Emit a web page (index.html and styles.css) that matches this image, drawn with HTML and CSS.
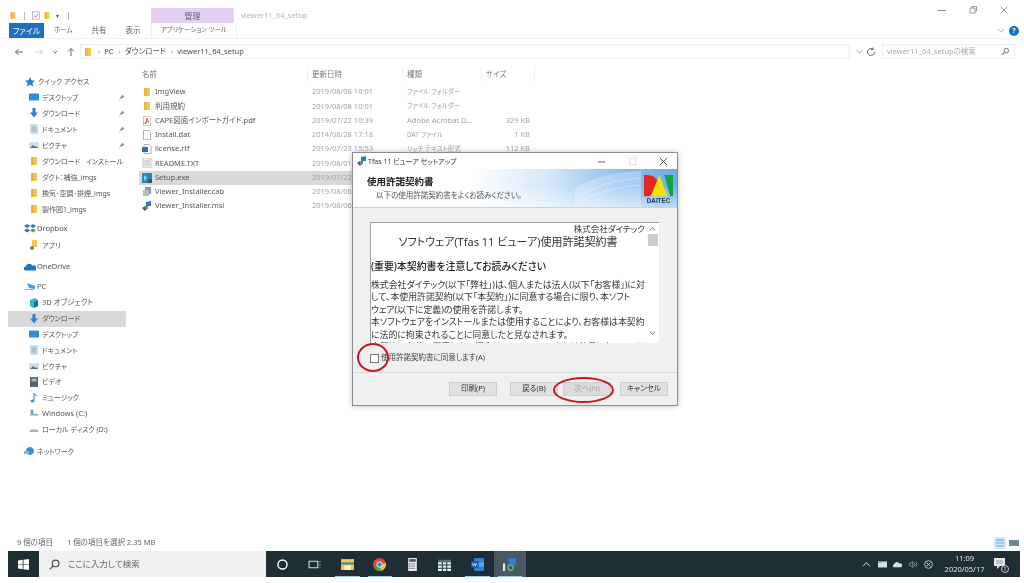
FILE: index.html
```html
<!DOCTYPE html>
<html lang="ja">
<head>
<meta charset="utf-8">
<title>viewer11_64_setup</title>
<link rel="stylesheet" href="styles.css">
</head>
<body>
<svg class="defs" aria-hidden="true">
  <symbol id="folder" viewBox="0 0 10 10"><path d="M2 1h6v8H2z" fill="#f2c94c"/><path d="M2 1h3v8H2z" fill="#e8b93a"/></symbol>
  <symbol id="pin" viewBox="0 0 8 8"><path d="M5 1l2 2-1.500.6L4 5.500 2.500 4 4.400 2.500zM3 5L1 7" fill="#888" stroke="#888" stroke-width=".6"/></symbol>
  <symbol id="desk" viewBox="0 0 10 10"><rect x="0" y="1.500" width="10" height="7" rx=".6" fill="#2f8fdc"/></symbol>
  <symbol id="down" viewBox="0 0 10 10"><path d="M3.500 0h3v4.500H9L5 9.500 1 4.500h2.500z" fill="#2f7fd0"/></symbol>
  <symbol id="doc" viewBox="0 0 10 10"><rect x="1" y="0" width="8" height="10" fill="#cfdbe3"/><path d="M2.500 3h5M2.500 5h5M2.500 7h5" stroke="#7f97a8" stroke-width=".7"/></symbol>
  <symbol id="pic" viewBox="0 0 10 10"><rect x="0" y="2" width="10" height="6.500" fill="#d5dee5"/><path d="M1 8l3-3 2 2 1-1 2 2z" fill="#55707f"/></symbol>
  <symbol id="video" viewBox="0 0 10 10"><rect x="1" y="0" width="8" height="10" fill="#56646e"/><rect x="2.500" y="1.500" width="5" height="3" fill="#a9b5bd"/></symbol>
  <symbol id="music" viewBox="0 0 10 10"><path d="M5 0v7.500" stroke="#2f9fd8" stroke-width="1.200"/><path d="M5 .5l3 2.500" stroke="#2f9fd8" stroke-width="1"/><ellipse cx="3.500" cy="8" rx="2" ry="1.600" fill="#2f9fd8"/></symbol>
  <symbol id="drive" viewBox="0 0 12 10"><path d="M1 7l2-1h7l1 1v1H1z" fill="#9aa5ab"/><rect x="2" y="1" width="3" height="5" fill="#4aa0d8"/></symbol>
  <symbol id="drive2" viewBox="0 0 12 10"><path d="M1 7l2-1.500h6L11 7v1.500H1z" fill="#a8b0b5"/></symbol>
  <symbol id="net" viewBox="0 0 12 10"><path d="M6 1a4 4 0 1 1-.1 0z" fill="#3b8fcf"/><rect x="0" y="5" width="5" height="3" fill="#7fb6dc"/></symbol>
  <symbol id="cloud" viewBox="0 0 12 8"><path d="M1 7.500a2 2 0 0 1 .6-3.800A3.600 3.600 0 0 1 8.400 2.700 2.600 2.600 0 0 1 11 7.500z" fill="#1677c0"/></symbol>
  <symbol id="box" viewBox="0 0 12 10"><path d="M3 0l3 2-3 2-3-2zM9 0l3 2-3 2-3-2zM3 4.500l3 2-3 2-3-2z" fill="#3a6fc4"/><path d="M9 4.500l3 2-3 2-3-2z" fill="#4caf50"/></symbol>
  <symbol id="appfolder" viewBox="0 0 10 10"><path d="M3 0h5v7H3z" fill="#f2c94c"/><circle cx="3" cy="8" r="2" fill="#5e8f4a"/></symbol>
  <symbol id="pcicon" viewBox="0 0 12 10"><path d="M3 1l8 3v3L5 6z" fill="#4f9bd0"/><path d="M1 7h9v1H1z" fill="#9aa5ab"/></symbol>
  <symbol id="cube" viewBox="0 0 10 10"><path d="M1 2l5-2 3 2v6l-5 2-3-2z" fill="#38b6d8"/><path d="M5 4l4-2v6l-4 2z" fill="#18748f"/></symbol>
  <symbol id="pdf" viewBox="0 0 10 10"><path d="M1.500.4h5l2 2v7.200h-7z" fill="#fff" stroke="#a9a9a9" stroke-width=".7"/><path d="M3 8c1-2 2-4 2-6 0 2 1 3 2 4-2 0-3 .6-4 2z" fill="none" stroke="#c63b32" stroke-width=".9"/></symbol>
  <symbol id="checkdoc" viewBox="0 0 10 10"><rect x=".5" y=".5" width="9" height="9" fill="#fff" stroke="#9a9a9a" stroke-width=".8"/><path d="M2.500 5l2 2 3-4" fill="none" stroke="#b5483f" stroke-width=".9"/></symbol>
  <symbol id="blank" viewBox="0 0 10 10"><path d="M1.500.4h5l2 2v7.200h-7z" fill="#fff" stroke="#8a8a8a" stroke-width=".7"/></symbol>
  <symbol id="rtf" viewBox="0 0 10 10"><path d="M2 .4h5l2 2v7.200H2z" fill="#fff" stroke="#8a8a8a" stroke-width=".7"/><rect x="0" y="3" width="6" height="5" fill="#2f6fb5"/></symbol>
  <symbol id="txt" viewBox="0 0 10 10"><rect x="1" y="0" width="8" height="10" fill="#eee" stroke="#a9a9a9" stroke-width=".6"/><path d="M2.500 3h5M2.500 5h5M2.500 7h5" stroke="#999" stroke-width=".6"/></symbol>
  <symbol id="setup" viewBox="0 0 10 10"><rect width="10" height="10" fill="#2a88b8"/><path d="M2 2l3 3-3 3z" fill="#7fe0f0"/><rect x="6" y="6" width="4" height="4" fill="#2d5f3a"/></symbol>
  <symbol id="cab" viewBox="0 0 10 10"><path d="M3 0h6v7H3z" fill="#8c9aa3"/><path d="M1 3h6v6H1z" fill="#b4bec4"/></symbol>
  <symbol id="msi" viewBox="0 0 10 10"><path d="M0 7l3-2 3 2-3 3z" fill="#3e5c7a"/><path d="M4 1l5-1v5H4z" fill="#2f78c4"/><path d="M3 5h3v3H3z" fill="#5aa04f"/></symbol>
</svg>

<div class="screen">
  <div class="explorer">
    <header class="titlebar">
      <div class="qat">
        <svg class="i10"><use href="#folder"/></svg>
        <span class="sep"></span>
        <svg class="i10"><use href="#checkdoc"/></svg>
        <svg class="i10"><use href="#folder"/></svg>
        <span class="qat-arrow">▾</span>
        <span class="sep"></span>
      </div>
      <div class="manage">管理</div>
      <div class="wintitle">viewer11_64_setup</div>
      <div class="winctl">
        <svg viewBox="0 0 10 10"><path d="M1 5.500h8" stroke="#8c8c8c"/></svg>
        <svg viewBox="0 0 10 10"><path d="M2 3h5v5H2zM4 3V1.500h4.500V6H7" fill="none" stroke="#8c8c8c" stroke-width=".9"/></svg>
        <svg viewBox="0 0 10 10"><path d="M1.500 1.500l7 7M8.500 1.500l-7 7" stroke="#8c8c8c" stroke-width=".9"/></svg>
      </div>
    </header>

    <nav class="ribbon">
      <span class="tab-file">ファイル</span>
      <span class="tab tab-home">ホーム</span>
      <span class="tab tab-share">共有</span>
      <span class="tab tab-view">表示</span>
      <span class="tab tab-app">アプリケーション ツール</span>
      <svg class="chev" viewBox="0 0 10 6"><path d="M1 1l4 4 4-4" fill="none" stroke="#999"/></svg>
      <span class="help">?</span>
    </nav>

    <div class="addressrow">
      <div class="navbtns">
        <svg viewBox="0 0 10 10"><path d="M9 5H1.500M4.500 2L1.500 5l3 3" fill="none" stroke="#666"/></svg>
        <svg viewBox="0 0 10 10"><path d="M1 5h7.500M5.500 2l3 3-3 3" fill="none" stroke="#ccc"/></svg>
        <svg viewBox="0 0 10 10"><path d="M3 4l2 2 2-2" fill="none" stroke="#777"/></svg>
        <svg viewBox="0 0 10 10"><path d="M5 9V1.500M2 4.500l3-3 3 3" fill="none" stroke="#666"/></svg>
      </div>
      <div class="address">
        <svg class="i10"><use href="#folder"/></svg>
        <span class="crumb">›</span><span>PC</span>
        <span class="crumb">›</span><span>ダウンロード</span>
        <span class="crumb">›</span><span>viewer11_64_setup</span>
      </div>
      <div class="addrtools">
        <svg viewBox="0 0 10 6"><path d="M1 1l4 4 4-4" fill="none" stroke="#777"/></svg>
        <svg viewBox="0 0 10 10"><path d="M8.500 5A3.500 3.500 0 1 1 7 2.100M7 .5v2H5" fill="none" stroke="#557" stroke-width=".9"/></svg>
      </div>
      <div class="search">
        <span>viewer11_64_setupの検索</span>
        <svg viewBox="0 0 10 10"><circle cx="6" cy="4" r="2.500" fill="none" stroke="#666"/><path d="M4 6L1.500 8.500" stroke="#666" stroke-width="1.200"/></svg>
      </div>
    </div>

    <main class="main">
      <aside class="sidebar">
        <div class="side-head"><svg class="i10" viewBox="0 0 10 10"><path d="M5 0l1.500 3.200L10 3.700 7.500 6l.7 3.500L5 7.800 1.800 9.500 2.500 6 0 3.700l3.500-.5z" fill="#2a7fc9"/></svg><span>クイック アクセス</span></div>
        <div class="side-row"><svg class="i10"><use href="#desk"/></svg><span>デスクトップ</span><svg class="pin"><use href="#pin"/></svg></div>
        <div class="side-row"><svg class="i10"><use href="#down"/></svg><span>ダウンロード</span><svg class="pin"><use href="#pin"/></svg></div>
        <div class="side-row"><svg class="i10"><use href="#doc"/></svg><span>ドキュメント</span><svg class="pin"><use href="#pin"/></svg></div>
        <div class="side-row"><svg class="i10"><use href="#pic"/></svg><span>ピクチャ</span><svg class="pin"><use href="#pin"/></svg></div>
        <div class="side-row"><svg class="i10"><use href="#folder"/></svg><span>ダウンロード&nbsp;&nbsp; インストール</span></div>
        <div class="side-row"><svg class="i10"><use href="#folder"/></svg><span>ダクト：補強_imgs</span></div>
        <div class="side-row"><svg class="i10"><use href="#folder"/></svg><span>換気･空調･排煙_imgs</span></div>
        <div class="side-row"><svg class="i10"><use href="#folder"/></svg><span>製作図1_imgs</span></div>

        <div class="side-top g-dropbox"><svg class="i12"><use href="#box"/></svg><span>Dropbox</span></div>
        <div class="side-row"><svg class="i10"><use href="#appfolder"/></svg><span>アプリ</span></div>
        <div class="side-top g-onedrive"><svg class="i12"><use href="#cloud"/></svg><span>OneDrive</span></div>
        <div class="side-top g-pc"><svg class="i12"><use href="#pcicon"/></svg><span>PC</span></div>
        <div class="side-row tight latin"><svg class="i10"><use href="#cube"/></svg><span>3D オブジェクト</span></div>
        <div class="side-row tight current"><svg class="i10"><use href="#down"/></svg><span>ダウンロード</span></div>
        <div class="side-row tight"><svg class="i10"><use href="#desk"/></svg><span>デスクトップ</span></div>
        <div class="side-row tight"><svg class="i10"><use href="#doc"/></svg><span>ドキュメント</span></div>
        <div class="side-row tight"><svg class="i10"><use href="#pic"/></svg><span>ピクチャ</span></div>
        <div class="side-row tight"><svg class="i10"><use href="#video"/></svg><span>ビデオ</span></div>
        <div class="side-row tight"><svg class="i10"><use href="#music"/></svg><span>ミュージック</span></div>
        <div class="side-row tight latin"><svg class="i10"><use href="#drive"/></svg><span>Windows (C:)</span></div>
        <div class="side-row tight"><svg class="i10"><use href="#drive2"/></svg><span>ローカル ディスク (D:)</span></div>
        <div class="side-top g-net jp"><svg class="i12"><use href="#net"/></svg><span>ネットワーク</span></div>
      </aside>

      <section class="files">
        <div class="file-head">
          <span class="h-name">名前</span>
          <span>更新日時</span>
          <span>種類</span>
          <span>サイズ</span>
        </div>
        <div class="file-row"><span class="fname"><svg class="i10"><use href="#folder"/></svg>ImgView</span><span>2019/08/08 10:01</span><span class="type-jp">ファイル フォルダー</span><span class="size"></span></div>
        <div class="file-row"><span class="fname"><svg class="i10"><use href="#folder"/></svg>利用規約</span><span>2019/08/08 10:01</span><span class="type-jp">ファイル フォルダー</span><span class="size"></span></div>
        <div class="file-row"><span class="fname"><svg class="i10"><use href="#pdf"/></svg>CAPE図面インポートガイド.pdf</span><span>2019/07/22 10:39</span><span>Adobe Acrobat D...</span><span class="size">329 KB</span></div>
        <div class="file-row"><span class="fname"><svg class="i10"><use href="#blank"/></svg>Install.dat</span><span>2014/08/28 17:18</span><span class="type-jp">DAT ファイル</span><span class="size">1 KB</span></div>
        <div class="file-row"><span class="fname"><svg class="i10"><use href="#rtf"/></svg>license.rtf</span><span>2019/07/23 15:53</span><span class="type-jp">リッチ テキスト形式</span><span class="size">112 KB</span></div>
        <div class="file-row"><span class="fname"><svg class="i10"><use href="#txt"/></svg>README.TXT</span><span>2019/08/01</span><span></span><span class="size"></span></div>
        <div class="file-row selected"><span class="fname"><svg class="i10"><use href="#setup"/></svg>Setup.exe</span><span>2019/07/22</span><span></span><span class="size"></span></div>
        <div class="file-row"><span class="fname"><svg class="i10"><use href="#cab"/></svg>Viewer_Installer.cab</span><span>2019/08/06</span><span></span><span class="size"></span></div>
        <div class="file-row"><span class="fname"><svg class="i10"><use href="#msi"/></svg>Viewer_Installer.msi</span><span>2019/08/06</span><span></span><span class="size"></span></div>
      </section>
    </main>

    <footer class="status">
      <span>9 個の項目</span><span>1 個の項目を選択 2.35 MB</span>
      <div class="views">
        <span class="view-on"><svg viewBox="0 0 12 12"><path d="M2 3h8M2 6h8M2 9h8" stroke="#7f9fb5"/></svg></span>
        <svg viewBox="0 0 12 12"><rect x="1" y="3" width="10" height="6" fill="#6f8696"/></svg>
      </div>
    </footer>
  </div>

  <div class="taskbar">
    <div class="startbtn"><svg viewBox="0 0 10 10"><path d="M0 1.300l4.300-.6v4H0zM5 .6L10 0v4.700H5zM0 5.300h4.300v4L0 8.700zM5 5.300h5V10l-5-.7z" fill="#fff"/></svg></div>
    <div class="tasksearch">
      <svg viewBox="0 0 10 10"><circle cx="6" cy="4" r="3" fill="none" stroke="#444"/><path d="M3.800 6.200L.8 9.200" stroke="#444" stroke-width="1.100"/></svg>
      <span>ここに入力して検索</span>
    </div>
    <div class="taskicons">
      <span class="ti"><svg viewBox="0 0 12 12"><circle cx="6" cy="6" r="4.200" fill="none" stroke="#fff" stroke-width="1.300"/></svg></span>
      <span class="ti"><svg viewBox="0 0 12 12"><path d="M1 3h8v6H1zM11 3v1M11 6v1M11 8.500v.5" fill="none" stroke="#d8dde0"/></svg></span>
      <span class="ti open"><svg viewBox="0 0 12 12"><path d="M0 1h12v10H0z" fill="#f4c542"/><path d="M0 4h12v2H0z" fill="#3c88c4"/><rect x="3" y="7" width="6" height="4" fill="#fff3c4"/></svg></span>
      <span class="ti open"><svg viewBox="0 0 12 12"><circle cx="6" cy="6" r="6" fill="#d94a3d"/><path d="M6 6L.8 9A6 6 0 0 0 7.500 11.800z" fill="#3fa455"/><path d="M6 6l5.800-1.500A6 6 0 0 1 7.500 11.800z" fill="#f3c22f"/><circle cx="6" cy="6" r="2.500" fill="#3d85d8" stroke="#fff" stroke-width=".8"/></svg></span>
      <span class="ti"><svg viewBox="0 0 12 12"><rect x="2" y="0" width="8" height="12" fill="#e8ecee"/><rect x="3" y="1" width="6" height="2.500" fill="#48555d"/><path d="M3 5.500h6M3 7.500h6M3 9.500h6" stroke="#48555d" stroke-dasharray="1 1" stroke-width="1.100"/></svg></span>
      <span class="ti"><svg viewBox="0 0 12 12"><rect x="0" y="0" width="12" height="12" fill="#eef1f2"/><path d="M0 3.500h12M0 6.500h12M0 9.500h12M4 3.500V12M8 3.500V12" stroke="#2b3a42"/><rect width="12" height="2.500" fill="#2b3a42"/></svg></span>
      <span class="ti open"><svg viewBox="0 0 12 12"><path d="M3 0h9v12H3z" fill="#2f7fd8"/><path d="M3 4h9v4H3z" fill="#5aa7ec"/><rect x="0" y="3" width="7" height="6" fill="#1c5aa8"/><path d="M1.500 4.500l.8 3 1-2.400 1 2.400.8-3" fill="none" stroke="#fff" stroke-width=".6"/></svg></span>
      <span class="ti open active"><svg viewBox="0 0 12 12"><rect x="5" y="0" width="7" height="6" fill="#2f7fd8"/><rect x="0" y="5" width="2" height="7" fill="#dfe6ea"/><circle cx="7" cy="9" r="2.500" fill="none" stroke="#6fbf73" stroke-width="1.200"/></svg></span>
    </div>
    <div class="tray">
      <svg viewBox="0 0 10 6"><path d="M1 5l4-4 4 4" fill="none" stroke="#dde" stroke-width="1.100"/></svg>
      <svg viewBox="0 0 12 8"><path d="M0 0h12v8H0z" fill="#cfe0ea"/><path d="M0 0h5v2H0z" fill="#8fa9b8"/></svg>
      <svg viewBox="0 0 12 8"><path d="M1 7.500a2 2 0 0 1 .6-3.800A3.600 3.600 0 0 1 8.400 2.700 2.600 2.600 0 0 1 11 7.500z" fill="#d7e0e5"/></svg>
      <svg viewBox="0 0 12 10"><path d="M0 3.500h2L5 1v8L2 6.500H0z" fill="none" stroke="#c5d0d6" stroke-width=".8"/><path d="M7 3a3 3 0 0 1 0 4M9 1.500a5 5 0 0 1 0 7" fill="none" stroke="#c5d0d6" stroke-width=".8"/></svg>
      <svg viewBox="0 0 10 10"><circle cx="5" cy="5" r="4.300" fill="none" stroke="#c5d0d6"/><path d="M3 3l4 4M7 3L3 7" stroke="#c5d0d6"/></svg>
      <div class="clock"><span>11:09</span><span>2020/05/17</span></div>
      <div class="notify"><svg viewBox="0 0 12 12"><path d="M0 0h11v8H6L3 11V8H0z" fill="#e4e9ec"/><path d="M2 3h7M2 5h7" stroke="#6f7e87" stroke-width=".7"/></svg><span class="badge">1</span></div>
    </div>
  </div>

  <div class="dialog">
    <div class="dlg-title">
      <svg class="i12"><use href="#msi"/></svg>
      <span>Tfas 11 ビューア セットアップ</span>
      <div class="dlg-ctl">
        <svg viewBox="0 0 10 10"><path d="M1 5.500h8" stroke="#555"/></svg>
        <svg viewBox="0 0 10 10"><rect x="1.500" y="1.500" width="7" height="7" fill="none" stroke="#ddd"/></svg>
        <svg viewBox="0 0 10 10"><path d="M1 1l8 8M9 1l-8 8" stroke="#444"/></svg>
      </div>
    </div>
    <div class="dlg-banner">
      <svg class="building" viewBox="0 0 70 38"><path d="M0 38V20C14 9 38 3 66 2v36z" fill="#fff" fill-opacity=".28"/><path d="M6 26C22 16 42 11 66 9M6 32C22 23 42 18 66 16" fill="none" stroke="#fff" stroke-opacity=".35"/></svg>
      <div class="dlg-heads">
        <strong>使用許諾契約書</strong>
        <span>以下の使用許諾契約書をよくお読みください。</span>
      </div>
      <svg class="logo" viewBox="0 0 30 30">
        <path d="M0 1h3c8 0 12 5 12 11s-4 11-12 11H0z" fill="#e0281e"/>
        <path d="M16 1l8 22H7z" fill="#f4e200"/>
        <path d="M21 1h9v22h-3z" fill="#12a24a"/>
        <text x="15" y="29.500" class="logo-text">DAITEC</text>
      </svg>
    </div>
    <div class="dlg-body">
      <div class="eula">
        <div class="eula-text">
          <div class="eula-corp">株式会社ダイテック</div>
          <div class="eula-title">ソフトウェア(Tfas 11 ビューア)使用許諾契約書</div>
          <div class="eula-head">(重要)本契約書を注意してお読みください</div>
          <div class="eula-line">株式会社ダイテック(以下「弊社」)は、個人または法人(以下「お客様」)に対</div>
          <div class="eula-line">して、本使用許諾契約(以下「本契約」)に同意する場合に限り、本ソフト</div>
          <div class="eula-line">ウェア(以下に定義)の使用を許諾します。</div>
          <div class="eula-line">本ソフトウェアをインストールまたは使用することにより、お客様は本契約</div>
          <div class="eula-line">に法的に拘束されることに同意したと見なされます。</div>
          <div class="eula-line">本契約の条件に同意しない場合は、インストールまたは使用しないでください</div>
        </div>
        <div class="scroll">
          <svg viewBox="0 0 10 6"><path d="M2 5l3-3 3 3" fill="none" stroke="#555"/></svg>
          <span class="thumb"></span>
          <svg class="scroll-down" viewBox="0 0 10 6"><path d="M2 1l3 3 3-3" fill="none" stroke="#555"/></svg>
        </div>
      </div>
      <label class="agree"><span class="check"></span><span>使用許諾契約書に同意します(A)</span></label>
    </div>
    <div class="dlg-buttons">
      <span class="btn">印刷(P)</span>
      <span class="btn">戻る(B)</span>
      <span class="btn disabled">次へ(N)</span>
      <span class="btn">キャンセル</span>
    </div>
  </div>

  <div class="ring ring-check"></div>
  <div class="ring ring-next"></div>
</div>
</body>
</html>
```

FILE: styles.css
```css
* { box-sizing: border-box; }
html, body { margin: 0; padding: 0; background: #fff; }
body { width: 1024px; height: 583px; overflow: hidden; }
.defs { position: absolute; width: 0; height: 0; }
svg { display: block; flex: none; }
.i10 { width: 10px; height: 10px; }
.i12 { width: 12px; height: 10px; }

.screen {
  position: relative;
  width: 1024px;
  height: 583px;
  display: flex;
  flex-direction: column;
  overflow: hidden;
  background: #fff;
  color: #555;
  font: 8px/1 "Noto Sans", "Noto Sans CJK JP", sans-serif;
  font-feature-settings: "palt";
  filter: blur(.5px);
}
.explorer { flex: 1; display: flex; flex-direction: column; min-height: 0; }

/* title bar */
.titlebar { height: 23px; display: flex; align-items: flex-end; padding-left: 9px; position: relative; }
.qat { width: 142px; height: 15px; display: flex; align-items: center; gap: 3px; }
.qat .i10 { width: 8px; height: 9px; }
.sep { width: 1px; height: 8px; background: #bbb; margin: 0 4px; }
.qat-arrow { font-size: 6px; margin: 0 2px; }
.manage { width: 83px; height: 15px; background: #e6d0f5; display: flex; align-items: center; justify-content: center; color: #666; }
.wintitle { margin-left: 7px; height: 15px; display: flex; align-items: center; color: #b6b6b6; font-size: 7.5px; }
.winctl { margin-left: auto; margin-right: 15px; height: 16px; display: flex; gap: 21px; margin-bottom: 2px; }
.winctl svg { width: 10px; height: 10px; }

/* ribbon */
.ribbon { height: 15px; display: flex; align-items: center; padding-left: 9px; position: relative; }
.tab-file { width: 35px; height: 15px; background: #1f6fc0; color: #fff; display: flex; align-items: center; justify-content: center; font-size: 8px; }
.tab { font-size: 7.5px; color: #666; }
.tab-home { margin-left: 10px; font-size: 6.5px; }
.tab-share { margin-left: 19px; }
.tab-view { margin-left: 19px; }
.tab-app { margin-left: 10px; padding: 0 9px; height: 15px; display: flex; align-items: center; border: 1px solid #eee; border-width: 0 1px; font-size: 6.5px; }
.chev { width: 8px; height: 5px; margin-left: auto; margin-right: 4px; }
.help { width: 10px; height: 10px; border-radius: 50%; background: #1572c4; color: #fff; font-size: 7px; font-weight: 700; display: flex; align-items: center; justify-content: center; margin-right: 5px; }

/* address row */
.addressrow { height: 25px; padding: 5px 9px 4px 14px; display: flex; align-items: stretch; border-top: 1px solid #f3f3f3; }
.navbtns { width: 66px; display: flex; align-items: center; gap: 6px; }
.navbtns svg { width: 10px; height: 10px; }
.navbtns svg:nth-child(2) { margin-left: 4px; }
.address { width: 770px; border: 1px solid #eee; display: flex; align-items: center; gap: 4px; padding-left: 2px; font-size: 7.5px; color: #4a4a4a; }
.crumb { color: #888; margin-left: 1px; }
.addrtools { width: 32px; display: flex; align-items: center; justify-content: center; gap: 3px; }
.addrtools svg:first-child { width: 7px; height: 5px; }
.addrtools svg:last-child { width: 10px; height: 10px; }
.search { width: 133px; border: 1px solid #eee; display: flex; align-items: center; justify-content: space-between; padding: 0 4px; color: #aaa; font-size: 7.5px; }
.search svg { width: 9px; height: 9px; }

/* main */
.main { flex: 1; display: flex; min-height: 0; }
.sidebar { width: 139px; padding-top: 11px; padding-left: 8px; flex: none; }
.side-head, .side-top, .side-row { display: flex; align-items: center; white-space: nowrap; font-size: 7px; }
.side-head { height: 15px; gap: 3px; margin-left: 8px; padding-left: 9px; }
.side-top { height: 16px; padding-left: 16px; gap: 1px; width: 118px; font-size: 7.5px; }
.side-row { height: 16px; width: 118px; padding-left: 21px; gap: 3px; position: relative; }
.side-row.tight { height: 15.8px; }
.side-row.latin { font-size: 7.5px; }
.side-top.jp { font-size: 7px; }
.pin { width: 7px; height: 7px; position: absolute; left: 110px; top: 5px; }
.current { background: #d9d9d9; }
.g-dropbox { margin-top: 4px; }
.g-onedrive { margin-top: 6px; }
.g-pc { margin-top: 4px; }
.g-net { margin-top: 6px; }

.files { width: 396px; flex: none; }
.file-head, .file-row { display: grid; grid-template-columns: 169px 95px 79px 53px; white-space: nowrap; align-items: center; }
.file-head { height: 22px; color: #777; font-size: 7.5px; }
.file-head span { padding-left: 4px; height: 16px; line-height: 16px; border-right: 1px solid #f0f0f0; }
.file-head .h-name { padding-left: 3px; }
.file-row { height: 14.25px; color: #a3a3a3; font-size: 7.5px; }
.file-row > span { padding-left: 4px; }
.file-row .type-jp { font-size: 6.5px; }
.file-row .fname { color: #555; display: flex; align-items: center; gap: 3px; padding-left: 3px; font-size: 7.5px; }
.file-row .size { text-align: right; padding-right: 5px; }
.selected { background: #d9d9d9; }

/* status */
.status { height: 16px; flex: none; display: flex; align-items: center; gap: 14px; padding: 0 4px 0 17px; font-size: 7.5px; color: #666; }
.views { margin-left: auto; display: flex; align-items: center; gap: 2px; }
.views svg { width: 12px; height: 12px; }
.view-on { background: #cce8ff; display: block; }

/* taskbar */
.taskbar { height: 26px; margin: 0 4px 6px 8px; background: #1f2d35; display: flex; align-items: stretch; flex: none; }
.startbtn { width: 31px; display: flex; align-items: center; justify-content: center; }
.startbtn svg { width: 11px; height: 11px; }
.tasksearch { width: 227px; background: #f0f0f0; display: flex; align-items: center; gap: 8px; padding-left: 10px; color: #666; font-size: 8.5px; }
.tasksearch svg { width: 11px; height: 11px; }
.taskicons { display: flex; }
.ti { width: 32.500px; display: flex; align-items: center; justify-content: center; position: relative; }
.ti svg { width: 13px; height: 13px; }
.ti.open::after { content: ""; position: absolute; left: 4px; right: 4px; bottom: 0; height: 1px; background: #9fd0ea; }
.ti.active { background: #4a5961; }
.tray { margin-left: auto; display: flex; align-items: center; gap: 6.5px; padding-right: 14px; color: #dfe6ea; }
.tray > svg { width: 9px; height: 9px; }
.clock { display: flex; flex-direction: column; align-items: center; gap: 4px; font-size: 7.5px; margin: 0 3px 0 5px; }
.notify { position: relative; width: 12px; height: 12px; }
.notify svg { width: 12px; height: 12px; }
.badge { position: absolute; right: -3px; bottom: -3px; width: 8px; height: 8px; border-radius: 50%; background: #1f2d35; border: 1px solid #c5d0d6; color: #fff; font-size: 5px; display: flex; align-items: center; justify-content: center; }

/* dialog */
.dialog { position: absolute; left: 352px; top: 152px; width: 326px; height: 254px; background: #f0f0f0; border: 1px solid #8d8d8d; box-shadow: 0 0 6px rgba(0,0,0,.25); display: flex; flex-direction: column; color: #333; }
.dlg-title { height: 16px; background: #fff; display: flex; align-items: center; padding-left: 3px; font-size: 7px; flex: none; }
.dlg-ctl { margin-left: auto; display: flex; gap: 22px; margin-right: 9px; }
.dlg-ctl svg { width: 9px; height: 9px; }
.dlg-banner { position: relative; height: 39px; flex: none; display: flex; justify-content: space-between; align-items: center; padding: 0 4px 0 14px; background: linear-gradient(180deg, rgba(255,255,255,0) 45%, rgba(255,255,255,.55) 100%), linear-gradient(90deg, #fff 36%, #d6e8f8 60%, #8fc0ee 82%, #6fabe8 100%); border-bottom: 1px solid #d0d0d0; }
.building { position: absolute; left: 222px; bottom: 0; width: 70px; height: 38px; }
.dlg-heads { display: flex; flex-direction: column; gap: 5px; position: relative; }
.dlg-heads strong { font-size: 9.5px; font-weight: 700; color: #222; }
.dlg-heads span { font-size: 7.5px; padding-left: 9px; color: #555; }
.logo { width: 29px; height: 31px; position: relative; }
.logo-text { font: 700 6.500px "Liberation Sans", sans-serif; fill: #1d3a6e; text-anchor: middle; }
.dlg-body { flex: 1; padding: 14px 18px 0 17px; min-height: 0; border-bottom: 1px solid #dcdcdc; }
.eula { position: relative; height: 121px; background: #fff; border: 1px solid #a0a0a0; border-width: 1px 0 0 1px; overflow: hidden; display: flex; }
.eula-text { flex: 1; min-width: 0; white-space: nowrap; color: #333; }
.eula-corp { font-size: 8.500px; text-align: right; padding-right: 2px; height: 11px; line-height: 11px; }
.eula-title { font-size: 11px; text-align: center; height: 16px; line-height: 16px; padding-right: 2px; }
.eula-head { font-size: 9.900px; font-weight: 500; height: 14px; line-height: 14px; margin-top: 9px; color: #222; }
.eula-line { font-size: 8.900px; height: 12.500px; line-height: 12.500px; }
.eula-head + .eula-line { margin-top: 5.500px; }
.scroll { width: 12px; flex: none; background: #fff; position: relative; padding-top: 3px; }
.scroll svg { width: 9px; height: 5px; margin-left: 1px; }
.scroll .scroll-down { position: absolute; bottom: 7px; }
.thumb { display: block; width: 10px; height: 12px; background: #cdcdcd; margin: 3px 0 0 1px; }
.agree { display: flex; align-items: center; gap: 2px; height: 10px; font-size: 7.5px; color: #444; margin-top: 10px; }
.check { width: 9px; height: 9px; background: #fff; border: 1px solid #777; }
.dlg-buttons { height: 32px; flex: none; display: flex; justify-content: flex-end; align-items: center; gap: 13px; padding: 0 9px 0 0; }
.btn { width: 48px; height: 14px; background: #e1e1e1; border: 1px solid #cfcfcf; display: flex; align-items: center; justify-content: center; font-size: 7.5px; color: #333; }
.btn.disabled { color: #a8a8a8; background: #dcdcdc; margin: 0 -4px 0 -8px; }

/* red annotation rings */
.ring { position: absolute; border: 2.5px solid #c41a1f; border-radius: 50%; }
.ring-check { left: 357px; top: 343px; width: 32px; height: 29px; }
.ring-next { left: 553px; top: 377px; width: 61px; height: 26px; }
```
